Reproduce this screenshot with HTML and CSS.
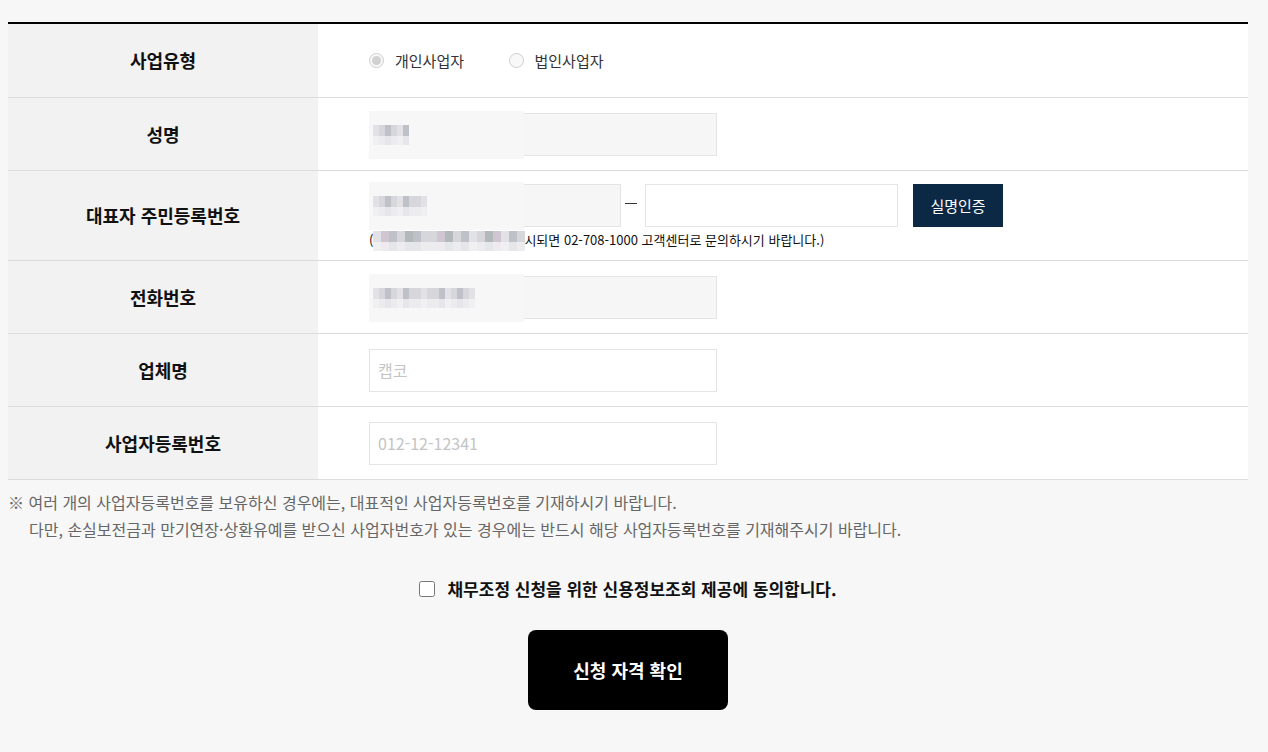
FILE: index.html
```html
<!DOCTYPE html>
<html lang="ko">
  <head>
    <meta charset="utf-8">
    <title>채무조정 신청 자격 확인</title>
    <link rel="stylesheet" href="styles.css">
  </head>
  <body>
    <div class="wrap">
      <table class="form-table">
        <tr>
          <th>사업유형</th>
          <td>
            <label class="radio"><input type="radio" name="bizType" checked disabled> 개인사업자</label>
            <label class="radio"><input type="radio" name="bizType" disabled> 법인사업자</label>
          </td>
        </tr>
        <tr>
          <th>성명</th>
          <td>
            <div class="field">
              <input class="input readonly" type="text" readonly>
              <span class="mosaic"><i></i><i></i><i></i><i></i><i></i><i></i></span>
            </div>
          </td>
        </tr>
        <tr class="tall">
          <th>대표자 주민등록번호</th>
          <td>
            <div class="jumin">
              <div class="field">
                <input class="input readonly half" type="text" readonly>
                <span class="mosaic"><i></i><i></i><i></i><i></i><i></i><i></i><i></i><i></i><i></i></span>
              </div>
              <span class="dash"></span>
              <input class="input half" type="password">
              <button class="navy-button">실명인증</button>
            </div>
            <p class="help">(<span class="mosaic-inline"><i></i><i></i><i></i><i></i><i></i><i></i><i></i><i></i><i></i><i></i><i></i><i></i><i></i><i></i><i></i><i></i><i></i><i></i><i></i></span>시되면 02-708-1000 고객센터로 문의하시기 바랍니다.)</p>
          </td>
        </tr>
        <tr>
          <th>전화번호</th>
          <td>
            <div class="field">
              <input class="input readonly" type="text" readonly>
              <span class="mosaic"><i></i><i></i><i></i><i></i><i></i><i></i><i></i><i></i><i></i><i></i><i></i><i></i><i></i><i></i><i></i><i></i><i></i></span>
            </div>
          </td>
        </tr>
        <tr>
          <th>업체명</th>
          <td><input class="input" type="text" placeholder="캡코"></td>
        </tr>
        <tr>
          <th>사업자등록번호</th>
          <td><input class="input" type="text" placeholder="012-12-12341"></td>
        </tr>
      </table>

      <div class="notice">
        <p>※ 여러 개의 사업자등록번호를 보유하신 경우에는, 대표적인 사업자등록번호를 기재하시기 바랍니다.</p>
        <p class="indent">다만, 손실보전금과 만기연장·상환유예를 받으신 사업자번호가 있는 경우에는 반드시 해당 사업자등록번호를 기재해주시기 바랍니다.</p>
      </div>

      <div class="agree">
        <label><input type="checkbox"> 채무조정 신청을 위한 신용정보조회 제공에 동의합니다.</label>
      </div>

      <div class="submit">
        <button class="black-button">신청 자격 확인</button>
      </div>
    </div>
  </body>
</html>
```

FILE: styles.css
```css
body {
  font-family: "Noto Sans CJK KR", "Noto Sans", sans-serif;
  margin: 0;
  background-color: #f7f7f7;
  color: #111;
}

.wrap {
  padding: 22px 20px 0 8px;
}

.form-table {
  width: 100%;
  border-collapse: collapse;
  border-top: 2px solid #000;
}

.form-table th,
.form-table td {
  border-bottom: 1px solid #dcdcdc;
  height: 73px;
  padding: 0;
  box-sizing: border-box;
}

.form-table tr:first-child th,
.form-table tr:first-child td {
  height: 74px;
}

.form-table th {
  width: 310px;
  background-color: #f2f2f2;
  font-size: 18px;
  font-weight: 700;
  color: #111;
}

.form-table td {
  background-color: #fff;
  padding: 1px 0 0 51px;
}

.form-table tr.tall th,
.form-table tr.tall td {
  height: 90px;
}

.form-table tr.tall td {
  vertical-align: top;
  padding-top: 13px;
}

.radio {
  display: inline-flex;
  align-items: center;
  font-size: 15px;
  color: #333;
  margin-right: 40px;
}

.radio input {
  width: 15px;
  height: 15px;
  margin: 0 11px 0 0;
}

.field {
  position: relative;
  display: inline-block;
  vertical-align: middle;
}

.input {
  display: block;
  width: 348px;
  height: 43px;
  box-sizing: border-box;
  border: 1px solid #e4e4e4;
  background-color: #fff;
  padding: 0 8px;
  font-family: inherit;
  font-size: 16px;
  outline: none;
}

.input::placeholder {
  color: #c4c4c4;
}

.input.readonly {
  background-color: #f6f6f6;
}

.input.half {
  width: 252px;
}

/* blurred personal data */
.mosaic {
  position: absolute;
  left: 0;
  top: -2px;
  width: 155px;
  height: 48px;
  background-color: #f7f7f7;
  display: flex;
  align-items: center;
  padding-left: 4px;
  box-sizing: border-box;
}

.mosaic i,
.mosaic-inline i {
  display: inline-block;
  width: 6px;
  height: 20px;
  background: linear-gradient(#d6d6db 0 55%, #ececee 55%);
}

.mosaic i:nth-child(3n),
.mosaic-inline i:nth-child(3n) {
  background: linear-gradient(#bfc1c8 0 55%, #e6e6ea 55%);
}

.mosaic i:nth-child(4n+1),
.mosaic-inline i:nth-child(4n+1) {
  background: linear-gradient(#e2e2e6 0 55%, #f0f0f2 55%);
}

.mosaic-inline {
  display: inline-flex;
  width: 151px;
  height: 20px;
  vertical-align: -6px;
  background-color: #f7f7f7;
}

.mosaic-inline i {
  flex: 1;
}

.mosaic-inline i:nth-child(5n) {
  background: linear-gradient(#b3b8bb 0 55%, #e4e6e8 55%);
}

.mosaic-inline i:nth-child(7n+2) {
  background: linear-gradient(#cfc6d2 0 55%, #eeeaf0 55%);
}

.jumin {
  display: flex;
  align-items: center;
}

.dash {
  width: 12px;
  height: 1px;
  margin: -4px 8px 0 4px;
  background-color: #333;
}

.jumin .input.half + .navy-button {
  margin-left: 15px;
}

.jumin .dash + .input.half {
  width: 253px;
}

.navy-button {
  width: 90px;
  height: 43px;
  border: none;
  background-color: #0b2945;
  color: #fff;
  font-family: inherit;
  font-size: 15px;
  cursor: pointer;
}

.help {
  margin: 4px 0 0 0;
  font-size: 13px;
  line-height: 18px;
  color: #111;
}

.notice {
  padding-top: 9px;
}

.notice p {
  margin: 0;
  font-size: 16px;
  line-height: 27px;
  color: #666;
}

.notice .indent {
  padding-left: 21px;
}

.agree {
  margin-top: 34px;
  text-align: center;
  font-size: 17px;
  font-weight: 700;
  line-height: 24px;
}

.agree label {
  display: inline-flex;
  align-items: center;
}

.agree input {
  width: 16px;
  height: 16px;
  margin: 0 12px 0 0;
}

.submit {
  margin-top: 28px;
  text-align: center;
}

.black-button {
  width: 200px;
  height: 80px;
  border: none;
  border-radius: 8px;
  background-color: #000;
  color: #fff;
  font-family: inherit;
  font-size: 18px;
  font-weight: 700;
  cursor: pointer;
}
```
